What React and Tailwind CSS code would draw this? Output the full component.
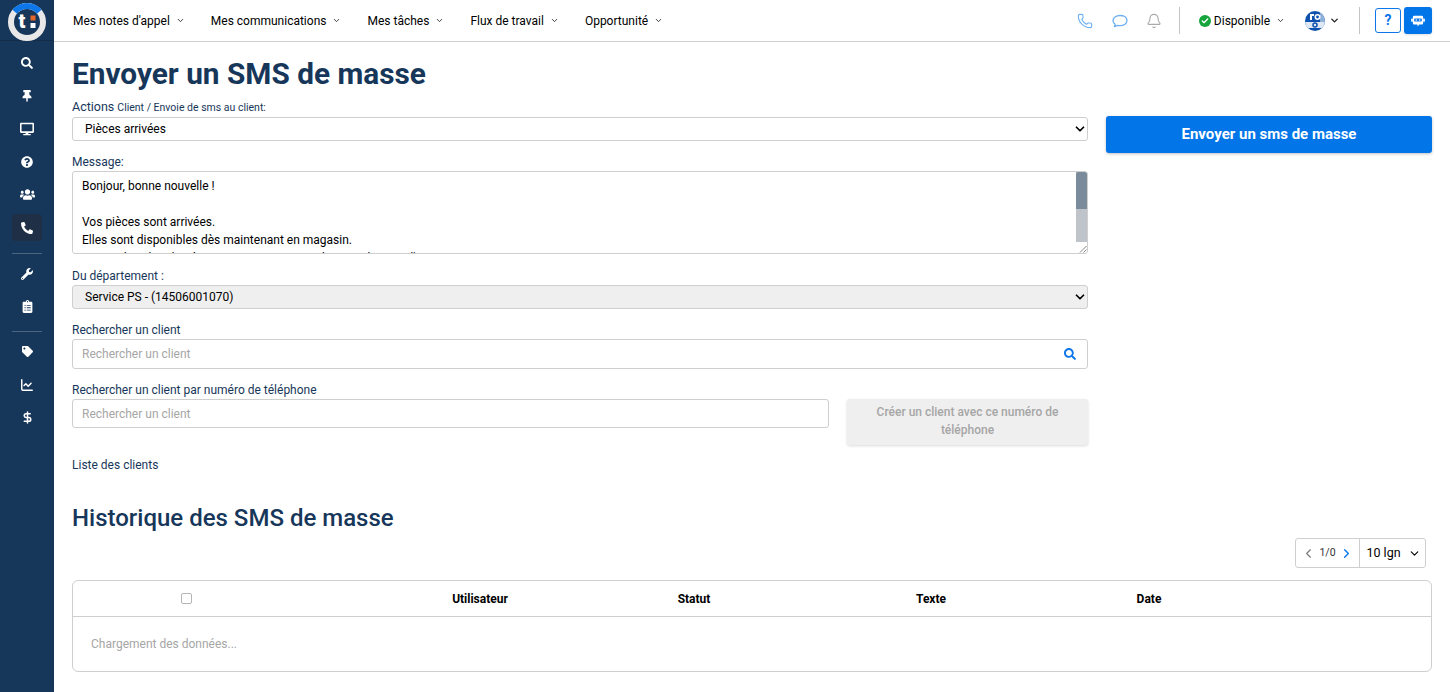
import React from "react";
import { Phone, Bell, ChevronDown, ChevronLeft, ChevronRight, Check, ChartLine, DollarSign } from "lucide-react";
import {
  FaSearch,
  FaThumbtack,
  FaDesktop,
  FaQuestionCircle,
  FaUsers,
  FaPhoneAlt,
  FaWrench,
  FaClipboardList,
  FaTag,
} from "react-icons/fa";

const menus = ["Mes notes d'appel", "Mes communications", "Mes tâches", "Flux de travail", "Opportunité"];

const SideIcon = ({ icon: Icon, active, size = "w-[13px] h-[13px]", stroke }) => (
  <div className={`w-[30px] h-[27px] my-[3px] flex items-center justify-center rounded ${active ? "bg-[#1f2f45]" : ""}`}>
    <Icon className={`text-white ${size}`} {...(stroke ? { strokeWidth: stroke } : {})} />
  </div>
);

const Logo = () => (
  <svg viewBox="0 0 40 40" className="w-[40px] h-[40px]">
    <circle cx="20" cy="20" r="16" fill="#17375a" stroke="#e8e8e8" strokeWidth="6" />
    <path d="M7.74 9.72 A16 16 0 0 1 32.26 9.72" fill="none" stroke="#0d76e8" strokeWidth="6" />
    <text x="11.5" y="26" fontSize="20" fontWeight="900" fontFamily="Roboto, sans-serif" fill="#fff">
      t
    </text>
    <rect x="23.5" y="13.5" width="5" height="5" fill="#e4662a" />
    <rect x="23.5" y="21" width="5" height="5" fill="#fff" />
  </svg>
);

// blue and white company picture in the top bar
const Avatar = () => (
  <div className="w-[20px] h-[20px] rounded-full overflow-hidden">
    <svg viewBox="0 0 20 20" className="w-[20px] h-[20px] block">
      <rect width="20" height="20" fill="#0f52ad" />
      <rect x="0" y="11" width="20" height="6" fill="#dfe8f3" />
      <rect x="15" y="0" width="5" height="11" fill="#8fb0d8" />
      <rect x="5" y="3" width="2" height="6" fill="#fff" />
      <rect x="5" y="3" width="4" height="2" fill="#fff" />
      <circle cx="12.500" cy="6" r="2.200" fill="none" stroke="#fff" strokeWidth="1.600" />
      <circle cx="10" cy="14" r="2" fill="none" stroke="#0f52ad" strokeWidth="1.500" />
    </svg>
  </div>
);

const Bubble = () => (
  <svg viewBox="0 0 16 14" className="w-[16px] h-[14px] text-[#6eb0f0] mr-[18px]" fill="none" stroke="currentColor" strokeWidth="1.3" strokeLinejoin="round">
    <path d="M8 1.500C4 1.500 1 3.700 1 6.500c0 1.500.8 2.800 2.100 3.700L2.500 12.700l3-1.300c.8.2 1.600.3 2.500.3 4 0 7-2.200 7-5.200s-3-5-7-5z" />
  </svg>
);

const RobotChat = () => (
  <svg viewBox="0 0 16 14" className="w-[14px] h-[12px]">
    <rect x="0" y="4" width="2" height="4" rx="0.8" fill="#fff" />
    <rect x="14" y="4" width="2" height="4" rx="0.8" fill="#fff" />
    <path d="M3.5 1h9A1.5 1.5 0 0 1 14 2.500v7a1.500 1.500 0 0 1-1.500 1.500H9.500L7.500 13.500V11h-4A1.500 1.500 0 0 1 2 9.500v-7A1.500 1.500 0 0 1 3.500 1z" fill="#fff" />
    <rect x="3.500" y="4" width="9" height="3.500" rx="1" fill="#0d76e8" />
    <circle cx="6" cy="5.750" r="0.9" fill="#fff" />
    <circle cx="10" cy="5.750" r="0.9" fill="#fff" />
  </svg>
);

const Label = ({ children }) => <label className="block text-[12px] leading-[14px] text-[#17375a]">{children}</label>;

export default function App() {
  return (
    <div className="flex w-[1450px] h-[692px] overflow-hidden bg-white font-['Roboto',sans-serif] text-[12px] text-black">
      {/* sidebar */}
      <aside className="w-[54px] shrink-0 bg-[#17375a] flex flex-col items-center">
        <div className="w-full h-[41px] border-b border-[#122c49] flex items-center justify-center pt-[3px]">
          <Logo />
        </div>
        <div className="pt-[5px] flex flex-col items-center">
          <SideIcon icon={FaSearch} size="w-[12px] h-[12px]" />
          <SideIcon icon={FaThumbtack} size="w-[12px] h-[12px]" />
          <SideIcon icon={FaDesktop} size="w-[14px] h-[14px]" />
          <SideIcon icon={FaQuestionCircle} size="w-[12px] h-[12px]" />
          <SideIcon icon={FaUsers} size="w-[15px] h-[15px]" />
          <SideIcon icon={FaPhoneAlt} active size="w-[12px] h-[12px]" />
          <div className="w-[30px] h-px bg-[#4d6680] mt-[9px] mb-[3px]"></div>
          <SideIcon icon={FaWrench} size="w-[12px] h-[12px]" />
          <SideIcon icon={FaClipboardList} />
          <div className="w-[30px] h-px bg-[#4d6680] mt-[8px] mb-[3px]"></div>
          <SideIcon icon={FaTag} size="w-[11px] h-[11px]" />
          <SideIcon icon={ChartLine} size="w-[14px] h-[14px]" stroke={2.5} />
          <SideIcon icon={DollarSign} size="w-[13px] h-[13px]" stroke={2.8} />
        </div>
      </aside>

      <div className="flex-1 min-w-0 flex flex-col">
        {/* top bar */}
        <header className="h-[42px] shrink-0 border-b border-[#cfcfcf] flex items-center pl-[19px] pr-[18px]">
          <nav className="flex items-center gap-[26px]">
            {menus.map((m) => (
              <div key={m} className="flex items-center gap-[6px] text-[12px]">
                {m}
                <ChevronDown className="w-[9px] h-[9px] text-[#333]" strokeWidth={2.5} />
              </div>
            ))}
          </nav>
          <div className="ml-auto flex items-center">
            <Phone className="w-[16px] h-[16px] text-[#6eb0f0] mr-[19px]" strokeWidth={1.7} />
            <Bubble />
            <Bell className="w-[16px] h-[16px] text-[#aaaaaa] mr-[17px]" strokeWidth={1.7} />
            <div className="w-px h-[27px] bg-[#c4c4c4] mr-[19px]"></div>
            <div className="w-[12px] h-[12px] rounded-full bg-[#15a53c] flex items-center justify-center mr-[3px]">
              <Check className="w-[8px] h-[8px] text-white" strokeWidth={4} />
            </div>
            <span className="text-[12px] mr-[6px]">Disponible</span>
            <ChevronDown className="w-[9px] h-[9px] text-[#333] mr-[20px]" strokeWidth={2.5} />
            <Avatar />
            <ChevronDown className="w-[11px] h-[11px] text-[#222] ml-[4px] mr-[19px]" strokeWidth={3} />
            <div className="w-px h-[27px] bg-[#c4c4c4] mr-[15px]"></div>
            <div className="w-[26px] h-[25px] rounded-[3px] border border-[#0d76e8] text-[#0d76e8] font-bold text-[14px] flex items-center justify-center mr-[3px]">
              ?
            </div>
            <div className="w-[28px] h-[27px] rounded-[3px] bg-[#0275e8] flex items-center justify-center shadow-sm">
              <RobotChat />
            </div>
          </div>
        </header>

        {/* content */}
        <main className="flex-1 pl-[18px] pr-[18px]">
          <h1 className="text-[29.8px] leading-[36px] font-bold text-[#17375a] mt-[14px]">Envoyer un SMS de masse</h1>

          <div className="flex gap-[18px] mt-[8px]">
            <div className="w-[1016px] shrink-0">
              <div className="text-[#17375a] text-[12px] leading-[14px]">
                <span className="text-[12.5px]">Actions</span> <span className="text-[10.5px]">Client / Envoie de sms au client:</span>
              </div>
              <div className="relative mt-[2px]">
                <select className="appearance-none w-full h-[24px] border border-[#cfcfcf] rounded-[3px] pl-[12px] text-[12px] bg-white outline-none">
                  <option>Pièces arrivées</option>
                </select>
                <ChevronDown className="absolute right-[1px] top-[5px] w-[14px] h-[14px] text-black" strokeWidth={3} />
              </div>

              <div className="mt-[14px]">
                <Label>Message:</Label>
              </div>
              <div className="relative mt-[2px] h-[83px] border border-[#cfcfcf] rounded-[3px] overflow-hidden">
                <textarea
                  readOnly
                  className="block w-full h-full resize-none overflow-hidden outline-none pl-[9px] pt-[5px] text-[12px] leading-[18px]"
                  value={"Bonjour, bonne nouvelle !\n\nVos pièces sont arrivées.\nElles sont disponibles dès maintenant en magasin.\nPassez les chercher à votre convenance pendant nos heures d'ouverture."}
                />
                <div className="absolute right-0 top-0 bottom-0 w-[11px] bg-[#bec4c9] flex flex-col">
                  <div className="h-[37px] bg-[#7a8b9c] rounded-t-[2px]"></div>
                  <div className="mt-auto h-[11px] bg-white flex items-end justify-end">
                    <svg viewBox="0 0 8 8" className="w-[8px] h-[8px]">
                      <path d="M1 7.500L7.500 1M4.500 7.500L7.500 4.500" stroke="#666" strokeWidth="0.8" fill="none" />
                    </svg>
                  </div>
                </div>
              </div>

              <div className="mt-[15px]">
                <Label>Du département :</Label>
              </div>
              <div className="relative mt-[2px]">
                <select className="appearance-none w-full h-[24px] border border-[#cfcfcf] rounded-[3px] pl-[12px] text-[12px] bg-[#efefef] outline-none">
                  <option>Service PS - (14506001070)</option>
                </select>
                <ChevronDown className="absolute right-[1px] top-[5px] w-[14px] h-[14px] text-black" strokeWidth={3} />
              </div>

              <div className="mt-[14px]">
                <Label>Rechercher un client</Label>
              </div>
              <div className="relative mt-[2px]">
                <input
                  placeholder="Rechercher un client"
                  className="w-full h-[30px] border border-[#cfcfcf] rounded-[3px] pl-[9px] text-[12px] outline-none placeholder:text-[#a6a6a6]"
                />
                <FaSearch className="absolute right-[12px] top-[9px] w-[12px] h-[12px] text-[#0d76e8]" />
              </div>

              <div className="mt-[14px]">
                <Label>Rechercher un client par numéro de téléphone</Label>
              </div>
              <div className="flex items-start gap-[18px] mt-[2px]">
                <input
                  placeholder="Rechercher un client"
                  className="w-[757px] h-[29px] border border-[#cfcfcf] rounded-[3px] pl-[9px] text-[12px] outline-none placeholder:text-[#a6a6a6]"
                />
                <button className="w-[241px] h-[46px] rounded-[3px] bg-[#efefef] text-[#a6a6a6] font-medium text-[12px] leading-[18px] px-[20px] pb-[3px] shadow-[0_1px_3px_rgba(0,0,0,0.15)]">
                  Créer un client avec ce numéro de téléphone
                </button>
              </div>
              <div className="mt-[13px] text-[12px] leading-[14px] text-[#17375a]">Liste des clients</div>
            </div>

            <div className="flex-1 pt-[16px]">
              <button className="w-full h-[37px] rounded-[3px] bg-[#0275e8] text-white font-bold text-[15px] shadow-[0_1px_3px_rgba(0,0,0,0.25)]">
                Envoyer un sms de masse
              </button>
            </div>
          </div>

          <h2 className="text-[24px] leading-[28px] font-medium text-[#17375a] mt-[32px]">Historique des SMS de masse</h2>

          <div className="flex justify-end pr-[6px] mt-[6px]">
            <div className="h-[30px] w-[131px] flex border border-[#cfcfcf] rounded-[3px]">
              <div className="w-[64px] flex items-center justify-center gap-[3px] border-r border-[#cfcfcf]">
                <ChevronLeft className="w-[15px] h-[15px] text-[#777]" strokeWidth={1.8} />
                <span className="text-[10.5px] text-[#333]">1/0</span>
                <ChevronRight className="w-[15px] h-[15px] text-[#0d76e8]" strokeWidth={2.2} />
              </div>
              <div className="flex-1 flex items-center justify-center gap-[7px] pl-[2px] text-[12.5px]">
                10 lgn
                <ChevronDown className="w-[13px] h-[13px]" strokeWidth={2} />
              </div>
            </div>
          </div>

          <div className="mt-[12px] border border-[#cfcfcf] rounded-[6px] h-[92px]">
            <div className="h-[36px] border-b border-[#cfcfcf] grid grid-cols-[227px_360px_68px_406px_30px_1fr] items-center text-center font-bold text-[12px]">
              <div className="flex justify-center">
                <span className="w-[11px] h-[11px] border border-[#b5b5b5] rounded-[2px]"></span>
              </div>
              <div>Utilisateur</div>
              <div>Statut</div>
              <div>Texte</div>
              <div>Date</div>
            </div>
            <div className="pl-[18px] pt-[20px] text-[12px] leading-[14px] text-[#a6a6a6]">Chargement des données...</div>
          </div>
        </main>
      </div>
    </div>
  );
}
